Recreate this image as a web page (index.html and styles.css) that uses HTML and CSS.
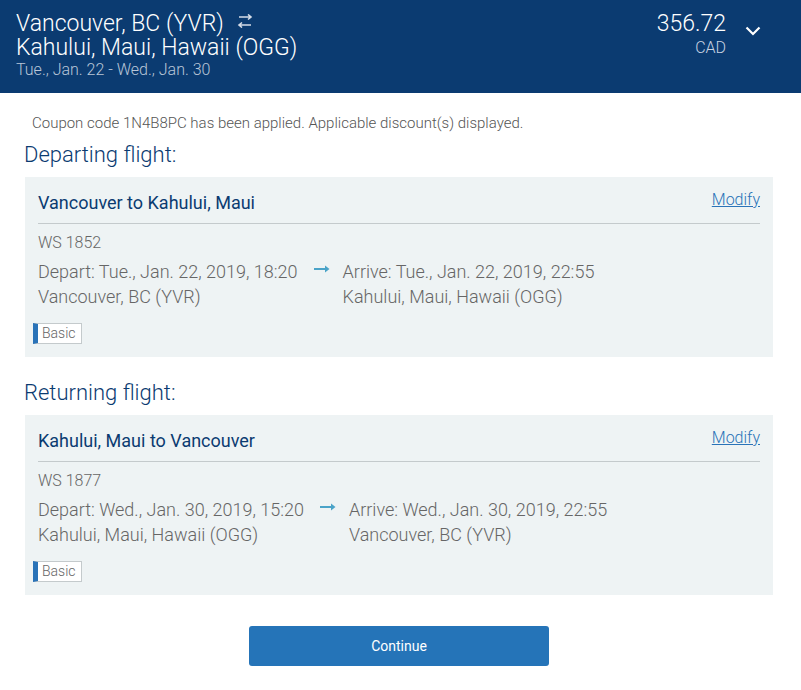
FILE: index.html
```html
<!DOCTYPE html>
<html>
<head>
<meta charset="utf-8">
<link rel="stylesheet" href="styles.css">
</head>
<body>
<header class="top">
  <div class="route">
    <div class="city">Vancouver, BC (YVR)
      <svg class="swap" width="16" height="14" viewBox="0 0 16 14"><path d="M2 3H14M11 0.5L14 3L11 5.5M14 11H2M5 8.5L2 11L5 13.5" fill="none" stroke="#d6dde8" stroke-width="1.6"/></svg>
    </div>
    <div class="city">Kahului, Maui, Hawaii (OGG)</div>
    <div class="dates">Tue., Jan. 22 - Wed., Jan. 30</div>
  </div>
  <div class="price">
    <div class="amount">356.72</div>
    <div class="cur">CAD</div>
  </div>
  <svg class="chev" width="16" height="10" viewBox="0 0 16 10"><path d="M1.5 1.5L8 8L14.5 1.5" fill="none" stroke="#fff" stroke-width="2.2"/></svg>
</header>
<main class="content">
  <p class="coupon">Coupon code 1N4B8PC has been applied. Applicable discount(s) displayed.</p>
  <h2 class="sec">Departing flight:</h2>
  <section class="card">
    <div class="card-head">
      <span class="title">Vancouver to Kahului, Maui</span>
      <a class="modify" href="#">Modify</a>
    </div>
    <div class="fno">WS 1852</div>
    <div class="legs">
      <div class="leg">
        <div>Depart: Tue., Jan. 22, 2019, 18:20</div>
        <div>Vancouver, BC (YVR)</div>
      </div>
      <svg class="arrow" width="16" height="8" viewBox="0 0 16 8"><path d="M0 4H14" stroke="#4aa3c8" stroke-width="2"/><path d="M11 0.5L15.5 4L11 7.5Z" fill="#4aa3c8"/></svg>
      <div class="leg">
        <div>Arrive: Tue., Jan. 22, 2019, 22:55</div>
        <div>Kahului, Maui, Hawaii (OGG)</div>
      </div>
    </div>
    <span class="badge">Basic</span>
  </section>
  <h2 class="sec sec2">Returning flight:</h2>
  <section class="card">
    <div class="card-head">
      <span class="title">Kahului, Maui to Vancouver</span>
      <a class="modify" href="#">Modify</a>
    </div>
    <div class="fno">WS 1877</div>
    <div class="legs">
      <div class="leg">
        <div>Depart: Wed., Jan. 30, 2019, 15:20</div>
        <div>Kahului, Maui, Hawaii (OGG)</div>
      </div>
      <svg class="arrow" width="16" height="8" viewBox="0 0 16 8"><path d="M0 4H14" stroke="#4aa3c8" stroke-width="2"/><path d="M11 0.5L15.5 4L11 7.5Z" fill="#4aa3c8"/></svg>
      <div class="leg">
        <div>Arrive: Wed., Jan. 30, 2019, 22:55</div>
        <div>Vancouver, BC (YVR)</div>
      </div>
    </div>
    <span class="badge">Basic</span>
  </section>
  <div class="actions"><button class="btn">Continue</button></div>
</main>
</body>
</html>
```
FILE: styles.css
```css
* { box-sizing: border-box; }
body {
  margin: 0;
  font-family: Roboto, "Liberation Sans", sans-serif;
  background: #fff;
  width: 801px;
}
.top {
  background: #0b3b71;
  height: 93px;
  display: flex;
  align-items: flex-start;
  padding: 12px 0 0 16px;
  color: #fff;
}
.route { flex: 1; }
.city {
  font-size: 23px;
  font-weight: 300;
  line-height: 24px;
  display: flex;
  align-items: flex-start;
}
.swap { margin: 2px 0 0 13px; }
.dates {
  font-size: 16px;
  font-weight: 300;
  color: #b9c6d8;
  line-height: 20px;
}
.price { text-align: right; }
.amount {
  font-size: 23px;
  font-weight: 300;
  line-height: 24px;
}
.cur {
  margin-top: 2px;
  font-size: 16px;
  font-weight: 300;
  color: #c9d3e2;
  line-height: 20px;
}
.chev { margin: 14px 40px 0 19px; }
.content { padding: 0 28px 0 24px; }
.coupon {
  margin: 0;
  padding: 21px 0 0 8px;
  font-size: 15px;
  font-weight: 300;
  color: #555;
  line-height: 18px;
}
.sec {
  margin: 10px 0 0;
  font-size: 22px;
  font-weight: 300;
  color: #0b3b71;
  line-height: 26px;
}
.sec2 { margin-top: 23px; }
.card {
  background: #eef3f4;
  margin: 9px 0 0 1px;
  padding: 0 13px 13px 13px;
  display: flex;
  flex-direction: column;
  align-items: flex-start;
}
.card-head {
  align-self: stretch;
  display: flex;
  justify-content: space-between;
  align-items: flex-start;
  border-bottom: 1px solid #c4cacc;
  height: 47px;
  padding-top: 15px;
}
.title {
  font-size: 18px;
  color: #0b3b71;
  line-height: 22px;
}
.modify {
  font-size: 16px;
  font-weight: 300;
  color: #2a73b8;
  text-decoration: underline;
  line-height: 20px;
  margin-top: -2px;
}
.fno {
  margin-top: 9px;
  font-size: 16px;
  font-weight: 300;
  color: #666;
  line-height: 20px;
}
.legs {
  display: flex;
  align-items: flex-start;
  margin-top: 6px;
  font-size: 18px;
  font-weight: 300;
  color: #666;
  line-height: 25px;
}
.arrow { margin: 6px 13px 0 16px; }
.badge {
  margin: 14px 0 0 -5px;
  background: #fff;
  border: 1px solid #c4cacc;
  border-left: 5px solid #2a73b8;
  font-size: 14px;
  font-weight: 300;
  color: #666;
  line-height: 19px;
  padding: 0 5px 0 4px;
}
.actions {
  display: flex;
  justify-content: center;
  padding: 31px 0 0;
  margin-left: 1px;
}
.btn {
  width: 300px;
  height: 40px;
  background: #2574b8;
  border: none;
  border-radius: 3px;
  color: #fff;
  font-family: Roboto, "Liberation Sans", sans-serif;
  font-size: 14px;
}
```
